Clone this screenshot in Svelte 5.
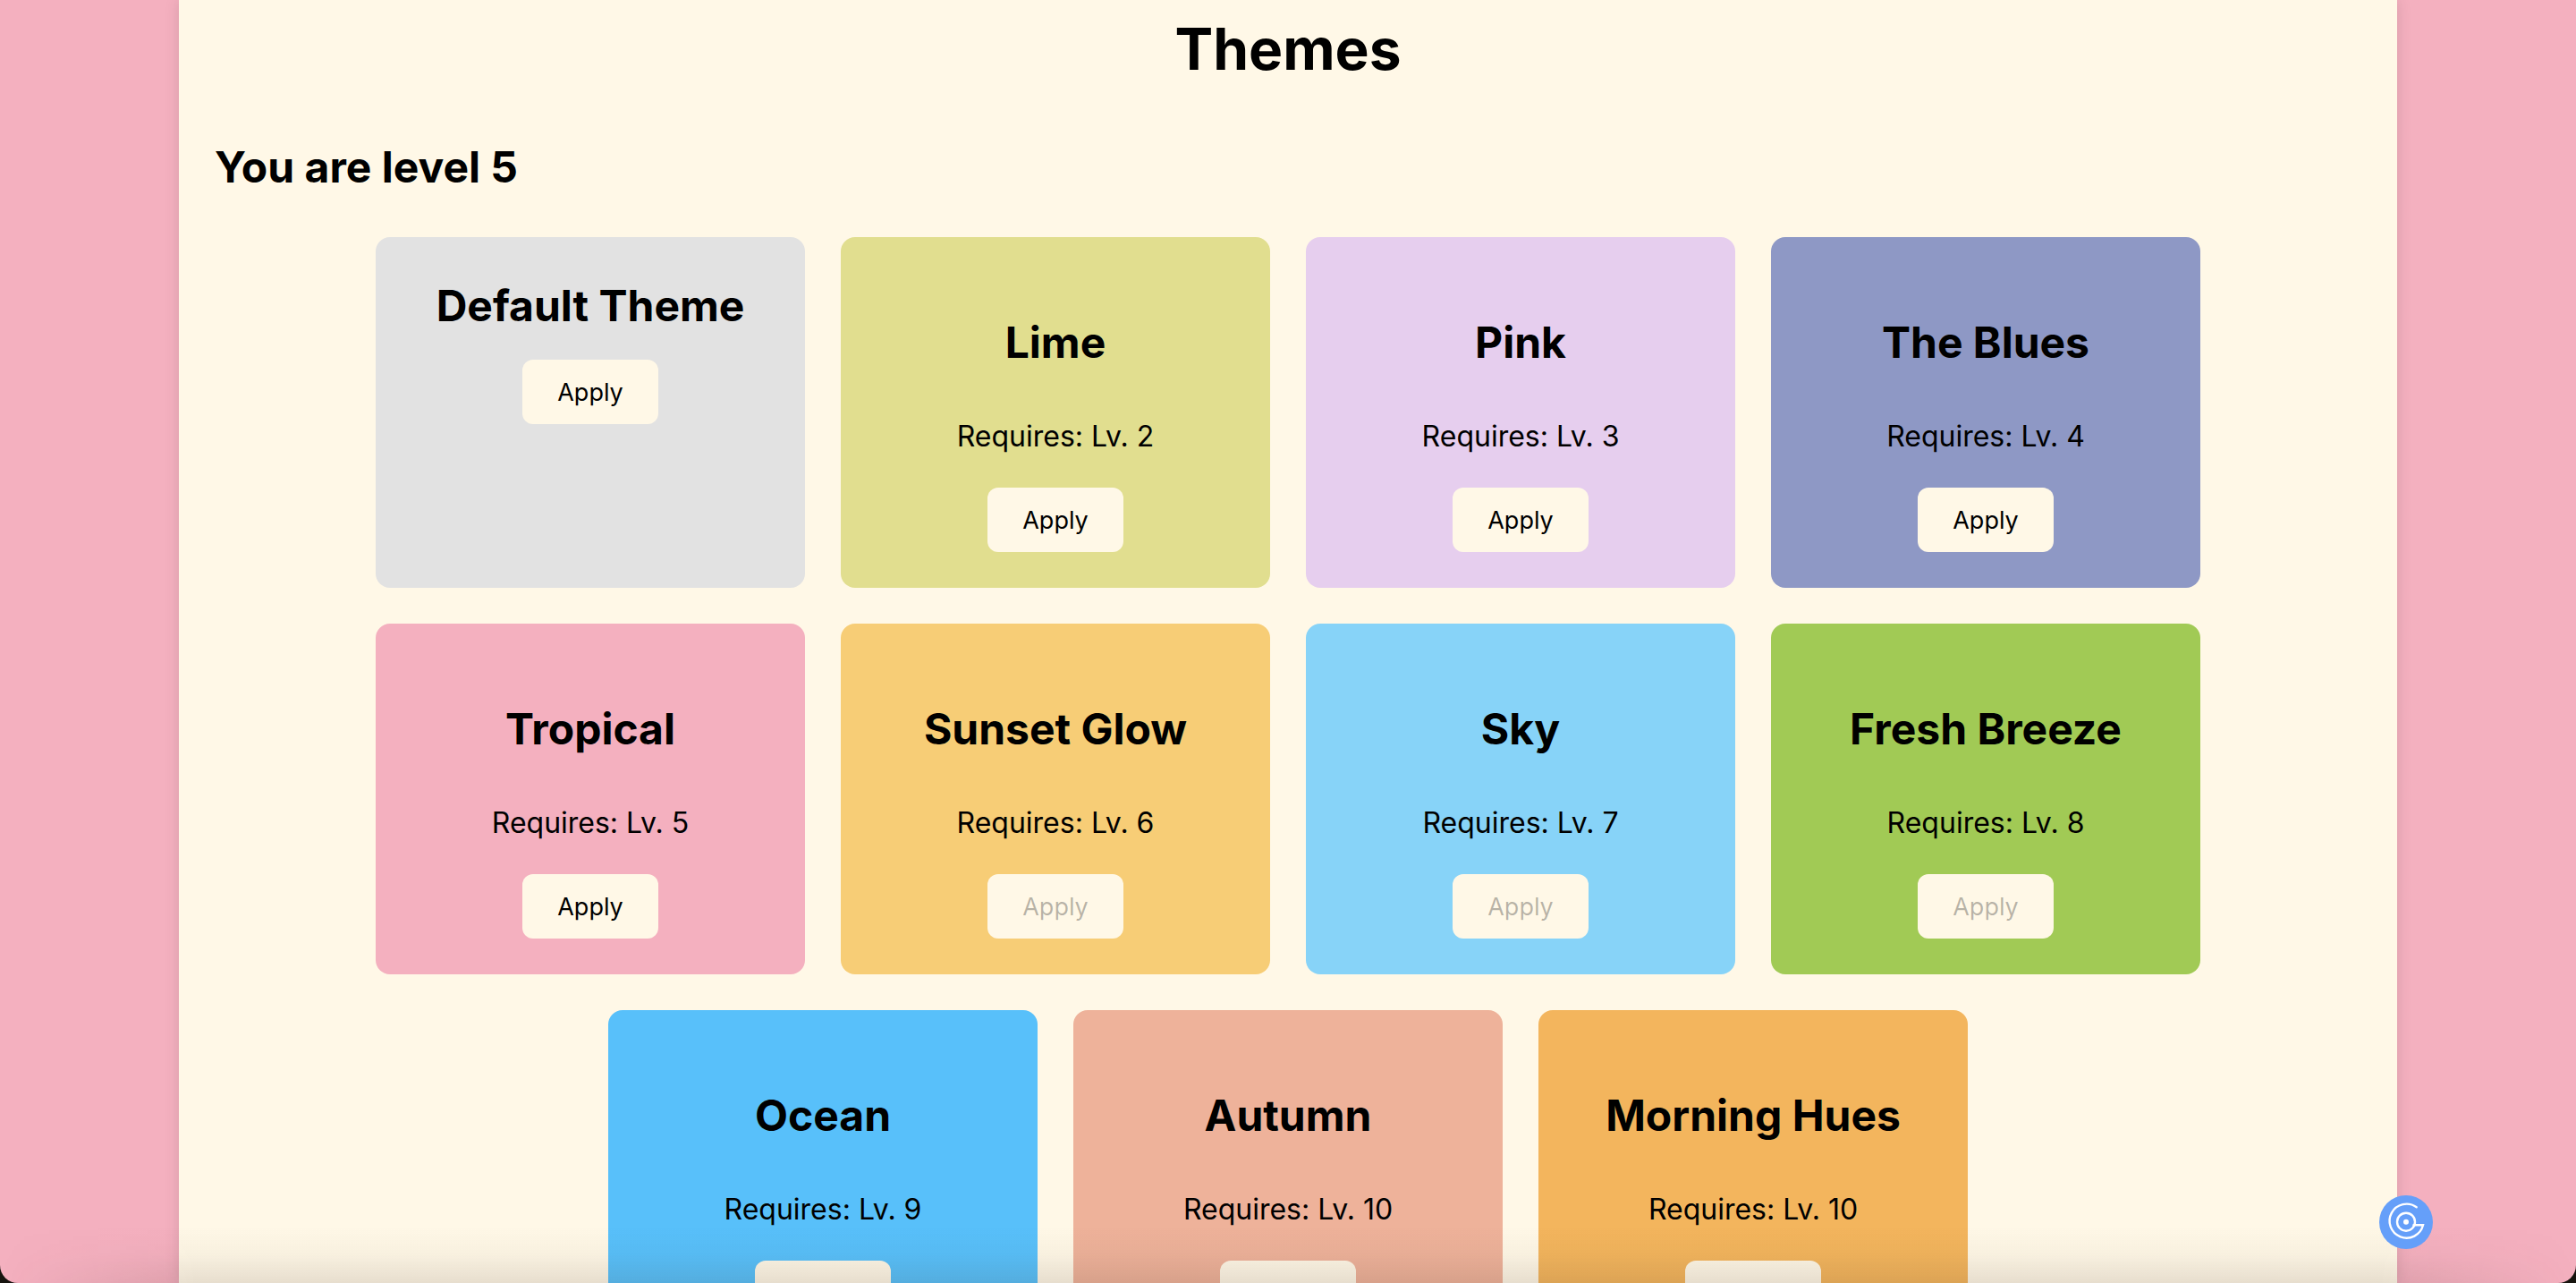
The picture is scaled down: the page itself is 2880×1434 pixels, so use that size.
<script>
	const themes = [
		{ name: 'Default Theme', color: '#e2e2e2' },
		{ name: 'Lime', color: '#e1de8f', level: 2 },
		{ name: 'Pink', color: '#e6ceee', level: 3 },
		{ name: 'The Blues', color: '#8e98c5', level: 4 },
		{ name: 'Tropical', color: '#f4b0bf', level: 5 },
		{ name: 'Sunset Glow', color: '#f7cd76', level: 6 },
		{ name: 'Sky', color: '#87d3f8', level: 7 },
		{ name: 'Fresh Breeze', color: '#a1ca55', level: 8 },
		{ name: 'Ocean', color: '#58c0fa', level: 9 },
		{ name: 'Autumn', color: '#eeb29a', level: 10 },
		{ name: 'Morning Hues', color: '#f3b55d', level: 10 }
	];
	const userLevel = 5;
</script>

<div class="page">
	<main class="panel">
		<h1>Themes</h1>
		<h2>You are level {userLevel}</h2>
		<div class="grid">
			{#each themes as theme}
				<div class="card" style="background: {theme.color}">
					<h3 class:plain={!theme.level}>{theme.name}</h3>
					{#if theme.level}
						<p>Requires: Lv. {theme.level}</p>
					{/if}
					<button disabled={theme.level > userLevel}>Apply</button>
				</div>
			{/each}
		</div>
	</main>
	<div class="shade"></div>
	<button class="fab" aria-label="Assistant">
		<svg viewBox="0 0 60 60" width="60" height="60" fill="none" stroke="#fff" stroke-width="2.4" stroke-linecap="round">
			<path d="M41.7 13.3A19 19 0 1 0 49 33.3H38.5" />
			<circle cx="30" cy="29.7" r="10" />
			<circle cx="30" cy="29.7" r="3" fill="#fff" stroke="none" />
		</svg>
	</button>
</div>

<style>
	:global(body) {
		margin: 0;
		background: #17140f;
		font-family: Inter, "Liberation Sans", sans-serif;
		color: #000;
	}
	.page {
		position: relative;
		height: 100vh;
		overflow: hidden;
		padding: 0 200px;
		background: #f4b0bf;
		border-radius: 0 0 20px 20px;
	}
	.panel {
		height: 100%;
		background: #fff8e7;
		box-shadow: 0 0 16px rgba(0, 0, 0, 0.12);
		padding: 16px 40px 0;
		box-sizing: border-box;
	}
	h1 {
		margin: 0;
		text-align: center;
		font-size: 64px;
		line-height: 78px;
		font-weight: 700;
	}
	h2 {
		margin: 64px 0 0;
		font-size: 48px;
		line-height: 58px;
		font-weight: 700;
	}
	.grid {
		display: flex;
		flex-wrap: wrap;
		justify-content: center;
		gap: 40px;
		margin-top: 49px;
	}
	.card {
		width: 480px;
		height: 392px;
		padding: 48px 40px 40px;
		box-sizing: border-box;
		border-radius: 16px;
		display: flex;
		flex-direction: column;
		align-items: center;
	}
	h3 {
		margin: 41px 0 0;
		font-size: 48px;
		line-height: 58px;
		font-weight: 700;
	}
	h3.plain {
		margin: 0 0 31px;
	}
	p {
		margin: 52px 0 33px;
		font-size: 32px;
		line-height: 48px;
	}
	button {
		width: 152px;
		height: 72px;
		border: 0;
		border-radius: 12px;
		background: #fff8e7;
		color: #000;
		font-family: inherit;
		font-size: 27px;
		padding: 0;
	}
	button:disabled {
		color: rgba(0, 0, 0, 0.28);
	}
	.shade {
		position: absolute;
		left: 0;
		right: 0;
		bottom: 0;
		height: 64px;
		background: linear-gradient(to bottom, rgba(60, 40, 30, 0), rgba(60, 40, 30, 0.035) 50%, rgba(60, 40, 30, 0.12));
		mask-image: linear-gradient(to right, transparent, #000 220px, #000 2660px, transparent);
		pointer-events: none;
	}
	.fab {
		position: absolute;
		left: 2660px;
		top: 1336px;
		width: 60px;
		height: 60px;
		border-radius: 50%;
		background: #659ff9;
		display: block;
	}
	.fab svg {
		display: block;
	}
</style>
